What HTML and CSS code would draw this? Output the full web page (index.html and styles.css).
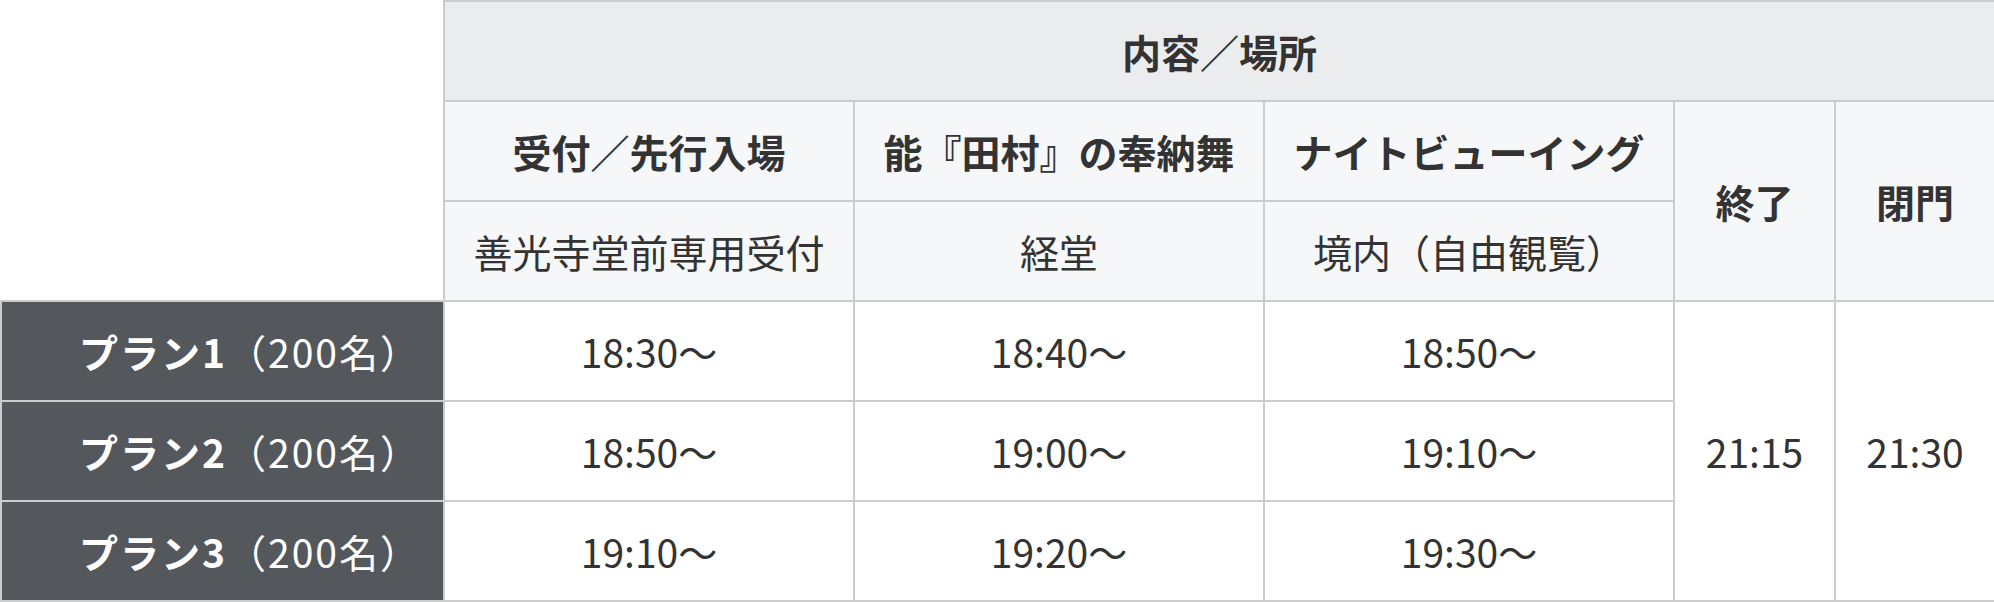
FILE: index.html
```html
<!DOCTYPE html>
<html lang="ja">
<head>
<meta charset="utf-8">
<title>スケジュール</title>
<link rel="stylesheet" href="styles.css">
</head>
<body>
<table class="schedule">
  <colgroup>
    <col class="c-plan">
    <col class="c-a">
    <col class="c-b">
    <col class="c-c">
    <col class="c-end">
    <col class="c-close">
  </colgroup>
  <thead>
    <tr>
      <td class="blank" rowspan="3"></td>
      <th class="head-top" colspan="5">内容／場所</th>
    </tr>
    <tr>
      <th class="head-sub">受付／先行入場</th>
      <th class="head-sub">能『田村』の奉納舞</th>
      <th class="head-sub">ナイトビューイング</th>
      <th class="head-sub" rowspan="2">終了</th>
      <th class="head-sub" rowspan="2">閉門</th>
    </tr>
    <tr>
      <td class="head-place">善光寺堂前専用受付</td>
      <td class="head-place">経堂</td>
      <td class="head-place">境内（自由観覧）</td>
    </tr>
  </thead>
  <tbody>
    <tr>
      <th class="plan"><b>プラン1</b>（200名）</th>
      <td>18:30〜</td>
      <td>18:40〜</td>
      <td>18:50〜</td>
      <td rowspan="3">21:15</td>
      <td rowspan="3">21:30</td>
    </tr>
    <tr>
      <th class="plan"><b>プラン2</b>（200名）</th>
      <td>18:50〜</td>
      <td>19:00〜</td>
      <td>19:10〜</td>
    </tr>
    <tr>
      <th class="plan"><b>プラン3</b>（200名）</th>
      <td>19:10〜</td>
      <td>19:20〜</td>
      <td>19:30〜</td>
    </tr>
  </tbody>
</table>
</body>
</html>
```
FILE: styles.css
```css
html, body {
  margin: 0;
  padding: 0;
  background: #ffffff;
}

body {
  font-family: "Noto Sans CJK JP", "Noto Sans", sans-serif;
  color: #333333;
}

.schedule {
  width: 1994px;
  border-collapse: collapse;
  table-layout: fixed;
  font-size: 39px;
  line-height: 1.2;
}

.c-plan { width: 443px; }
.c-a { width: 410px; }
.c-b { width: 410px; }
.c-c { width: 410px; }
.c-end { width: 161px; }
.c-close { width: 160px; }

.schedule th,
.schedule td {
  border: 2px solid #cccccc;
  height: 98px;
  padding: 0;
  text-align: center;
  vertical-align: middle;
  background: #ffffff;
  font-weight: 400;
}

.schedule td.blank {
  border: none;
  background: #ffffff;
}

.schedule th.head-top {
  background: #ebecee;
  font-weight: 700;
}

.schedule th.head-sub {
  background: #f6f7f9;
  font-weight: 700;
}

.schedule td.head-place {
  background: #f6f7f9;
}

.schedule th.plan {
  background: #54575c;
  color: #ffffff;
  text-align: right;
  padding-right: 22px;
  letter-spacing: 2px;
  font-weight: 400;
}

.schedule th.plan b {
  font-weight: 700;
}
```
